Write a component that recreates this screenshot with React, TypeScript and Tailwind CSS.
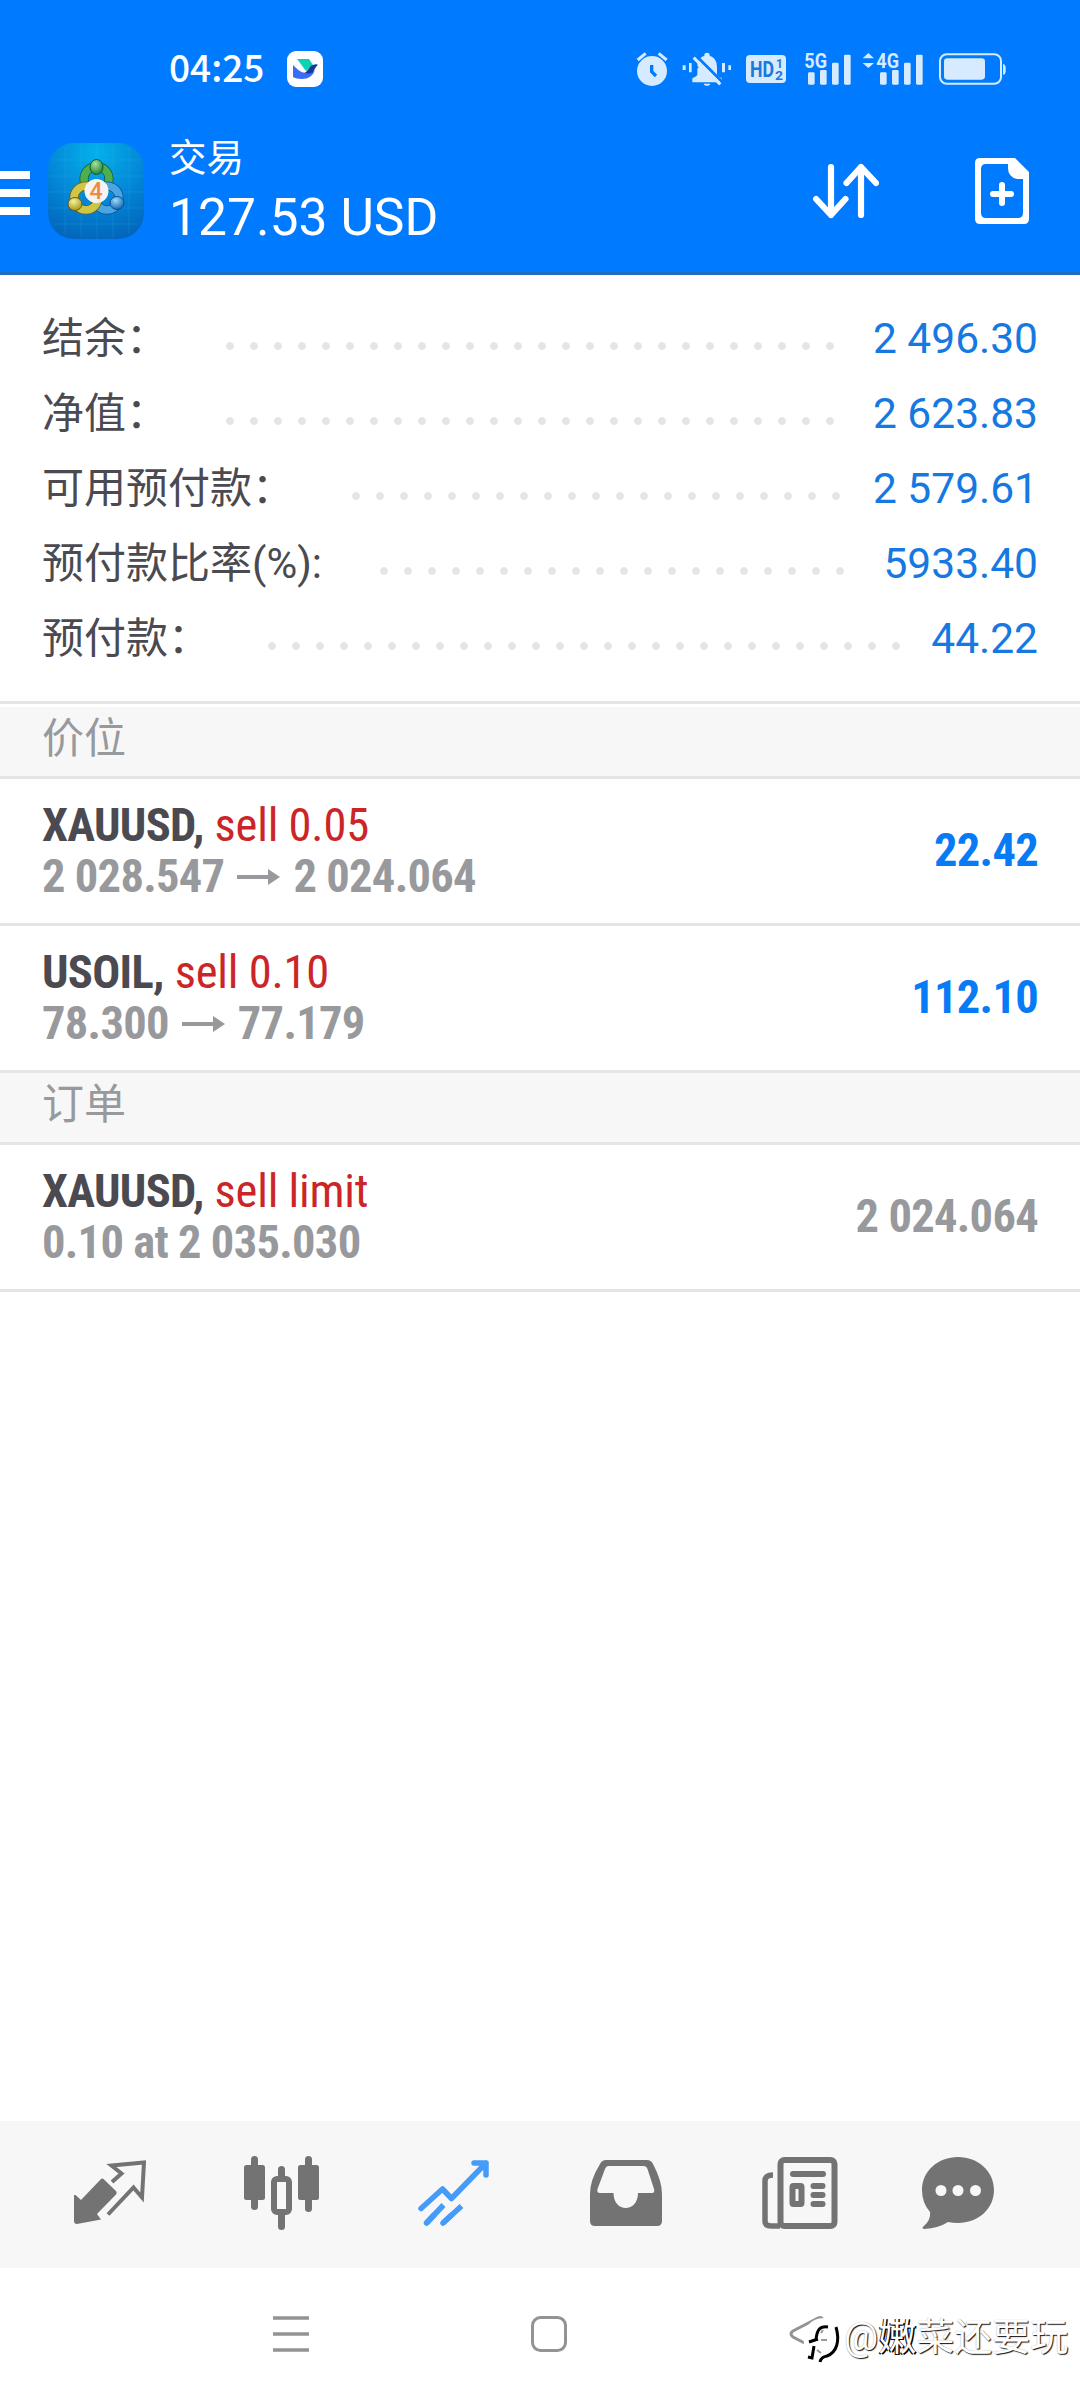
import React from 'react';

interface BalanceRow {
  label: string;
  value: string;
  dots: number;
}

const balance: BalanceRow[] = [
  { label: '结余：', value: '2 496.30', dots: 26 },
  { label: '净值：', value: '2 623.83', dots: 26 },
  { label: '可用预付款：', value: '2 579.61', dots: 21 },
  { label: '预付款比率(%):', value: '5933.40', dots: 20 },
  { label: '预付款：', value: '44.22', dots: 27 },
];

const positions = [
  { symbol: 'XAUUSD', side: 'sell 0.05', from: '2 028.547', to: '2 024.064', profit: '22.42' },
  { symbol: 'USOIL', side: 'sell 0.10', from: '78.300', to: '77.179', profit: '112.10' },
];

function SailBadge() {
  return (
    <svg className="w-9 h-9 ml-[23px]" viewBox="0 0 36 36">
      <rect width="36" height="36" rx="9" fill="#fff" />
      <path d="M10 8h12l4 6-7 6z" fill="#0bd3b5" />
      <path d="M6 14c4 4 7 7 12 8 4 1 8-1 10-3-2 6-7 9-13 9-4 0-7-1-9-2z" fill="#3a6df5" />
      <path d="M17 22c4-1 5-7 9-8 2-1 4-1 5 0-2 1-3 4-5 7-2 2-6 2-9 1z" fill="#17399b" />
    </svg>
  );
}

function AlarmIcon() {
  return (
    <svg className="w-8 h-[34px]" viewBox="18 36 96 102">
      <circle cx="66" cy="93" r="45" fill="#d6ebff" />
      <path d="M23 60l24-20M110 60L86 40" stroke="#d6ebff" strokeWidth="9" fill="none" />
      <path d="M65 75v20l13 13" stroke="#007aff" strokeWidth="10" fill="none" />
    </svg>
  );
}

function MutedBellIcon() {
  return (
    <svg className="w-[50px] h-[34px] ml-[14px]" viewBox="153 36 150 102">
      <g fill="#d6ebff">
        <path d="M184 127v-10c0-5 15-6 15-14V82c0-18 6-30 21-34v-4c0-8 16-8 16 0v4c15 4 22 16 22 34v21c0 8 15 9 15 14v10z" />
        <path d="M218 131h20c-2 8-18 8-20 0zM155 76h9v14h-9zM174 69h8v28h-8zM273 69h9v28h-9zM292 76h8v14h-8z" />
      </g>
      <path d="M196 48l84 84" stroke="#007aff" strokeWidth="9" />
      <path d="M183 66l18 18" stroke="#007aff" strokeWidth="6" />
      <path d="M188 53l80 80" stroke="#d6ebff" strokeWidth="9" />
    </svg>
  );
}

function HdBadge() {
  return (
    <svg className="w-10 h-7 ml-[14px]" viewBox="0 0 40 28">
      <rect width="40" height="28" rx="4" fill="#d6ebff" />
      <g fill="#1a78de" className="font-['Roboto'] font-bold">
        <text x="4" y="22" fontSize="22" textLength="24" lengthAdjust="spacingAndGlyphs">HD</text>
        <text x="30" y="13" fontSize="12">1</text>
        <text x="29" y="25" fontSize="12" textLength="8" lengthAdjust="spacingAndGlyphs">2</text>
      </g>
    </svg>
  );
}

function Signal({ label, updown }: { label: string; updown?: boolean }) {
  return (
    <svg className="w-[62px] h-[34px] overflow-visible" viewBox="694 34 186 102">
      <g fill="#d6ebff">
        {updown && <path d="M699 53l17-16 17 16zM699 67l17 15 17-15z" />}
        <text x="740" y="81" fontSize="61" textLength="68" lengthAdjust="spacingAndGlyphs" className="font-['Roboto'] font-bold">
          {label}
        </text>
        <rect x="751" y="95" width="20" height="37" rx="4" />
        <rect x="787" y="88" width="20" height="44" rx="4" />
        <rect x="823" y="66" width="20" height="66" rx="4" />
        <rect x="859" y="42" width="20" height="90" rx="4" />
      </g>
    </svg>
  );
}

function BatteryIcon() {
  return (
    <svg className="w-[67px] h-8 ml-4" viewBox="927 37 201 96">
      <rect x="930" y="41" width="183" height="88" rx="20" fill="none" stroke="#d6ebff" strokeWidth="6" />
      <rect x="942" y="53" width="123" height="64" rx="10" fill="#d6ebff" />
      <path d="M1119 69q8 2 8 10v14q0 8-8 10z" fill="#d6ebff" />
    </svg>
  );
}

function AppLogo() {
  return (
    <svg className="w-24 h-24 ml-[18px]" viewBox="0 0 96 96">
      <defs>
        <radialGradient id="tile" cx=".5" cy=".1" r=".95">
          <stop offset="0" stopColor="#04b1ea" />
          <stop offset=".5" stopColor="#0389d8" />
          <stop offset="1" stopColor="#0264ba" />
        </radialGradient>
        <radialGradient id="green" cx=".4" cy=".3" r=".7">
          <stop offset="0" stopColor="#a9e29a" />
          <stop offset="1" stopColor="#23833a" />
        </radialGradient>
        <radialGradient id="yellow" cx=".4" cy=".3" r=".7">
          <stop offset="0" stopColor="#f5f0a0" />
          <stop offset="1" stopColor="#a89b1c" />
        </radialGradient>
        <radialGradient id="blue" cx=".4" cy=".3" r=".7">
          <stop offset="0" stopColor="#9bdcfa" />
          <stop offset="1" stopColor="#1768b4" />
        </radialGradient>
      </defs>
      <rect width="96" height="96" rx="26" fill="url(#tile)" />
      <path
        d="M17 4v88M33 1v94M49 0v96M65 1v94M81 5v86M3 17h90M1 33h94M0 49h96M1 65h94M5 81h86"
        stroke="#4fc3f5"
        strokeOpacity=".2"
        strokeWidth=".8"
      />
      <circle cx="48.500" cy="36" r="12.500" fill="none" stroke="#145c33" strokeWidth="9" />
      <circle cx="48.500" cy="36" r="12.500" fill="none" stroke="#4fae4d" strokeWidth="7.500" />
      <circle cx="59" cy="55" r="12" fill="none" stroke="#0d4f92" strokeWidth="9" />
      <circle cx="59" cy="55" r="12" fill="none" stroke="#4aa5e0" strokeWidth="7.500" />
      <circle cx="38" cy="55" r="12" fill="none" stroke="#696012" strokeWidth="9" />
      <circle cx="38" cy="55" r="12" fill="none" stroke="#cfc645" strokeWidth="7.500" />
      <ellipse cx="48.500" cy="24" rx="6.500" ry="7.500" fill="url(#green)" stroke="#145c33" />
      <ellipse cx="27" cy="61" rx="7" ry="6.500" fill="url(#yellow)" stroke="#696012" />
      <ellipse cx="69" cy="60" rx="7" ry="6.500" fill="url(#blue)" stroke="#0d4f92" />
      <circle cx="48.500" cy="48" r="12" fill="#f6f4f2" />
      <text x="48" y="56" fontSize="23" textAnchor="middle" fill="#f08a3c" className="font-['Roboto'] font-medium">
        4
      </text>
    </svg>
  );
}

function SortIcon() {
  return (
    <svg className="w-[66px] h-[56px]" viewBox="0 0 66 56" fill="none" stroke="#fff" strokeWidth="6.200" strokeLinecap="round" strokeLinejoin="round">
      <path d="M18 4v48M3.100 36L18 52l14.500-16M48 52V4M33.500 20L48 4l15 16" />
    </svg>
  );
}

function NewOrderIcon() {
  return (
    <svg className="w-[54px] h-[66px] ml-24" viewBox="0 0 54 66">
      <path
        fill="#fff"
        fillRule="evenodd"
        d="M5 0h35l14 14v47q0 5-5 5H5q-5 0-5-5V5q0-5 5-5zm6 6q-5 0-5 5v44q0 5 5 5h32q5 0 5-5V21h-6q-9-2-9-11V6z"
      />
      <path d="M18 36h18M27 27v18" stroke="#fff" strokeWidth="6" strokeLinecap="round" />
    </svg>
  );
}

function PriceArrow() {
  return (
    <svg className="w-[43px] h-4 mx-[13px]" viewBox="0 0 43 16">
      <path d="M0 6h31V0l12 8-12 8v-6H0z" fill="#98999c" />
    </svg>
  );
}

function SectionTitle({ title }: { title: string }) {
  return (
    <div className="h-[72px] bg-[#f7f7f7] border-b-[3px] border-[#e5e5e5] px-[42px] pt-[2px] text-[42px] leading-[60px] text-[#98999c]">
      {title}
    </div>
  );
}

function TradeRow({ symbol, side, value, valueClass, children }: {
  symbol: string;
  side: string;
  value: string;
  valueClass: string;
  children: React.ReactNode;
}) {
  return (
    <div className="h-[147px] border-b-[3px] border-[#e5e5e5] px-[42px] flex items-center justify-between font-['Roboto_Condensed','Roboto',sans-serif] [font-stretch:75%] text-[46.500px] tracking-[-0.700px] font-bold">
      <div className="leading-[51px]">
        <div className="text-[#4a4a50]">
          {symbol}, <span className="ml-px text-[#cc2527] font-[450] tracking-[-0.200px]">{side}</span>
        </div>
        <div className="flex items-center text-[#98999c]">{children}</div>
      </div>
      <span className={valueClass}>{value}</span>
    </div>
  );
}

function TabBar() {
  return (
    <nav className="h-[147px] bg-[#f7f7f7] flex items-center pl-[74px] pb-[3px]">
      <svg className="w-[72px] h-[66px]" viewBox="0 0 72 66">
        <path d="M27 19q1.500-1 3 .5L42 31q1.500 2 0 3.500L23 54l4 5.500L3 64q-3 0-3-3V35l1.500 0L7 40z" fill="#737373" />
        <path d="M38 22l9.500-8.500L37.500 5.500 70 2.500 68 37.500 59.500 27.500 34 54.500" fill="none" stroke="#737373" strokeWidth="4" />
      </svg>
      <svg className="w-[75px] h-[74px] ml-[98px]" viewBox="0 0 75 74" fill="#737373">
        <rect y="9" width="21" height="35" rx="2.500" />
        <rect x="7" width="7" height="54" rx="3.500" />
        <rect x="54" y="9" width="21" height="35" rx="2.500" />
        <rect x="61" width="7" height="56" rx="3.500" />
        <rect x="34" y="10" width="7" height="14" rx="3.500" />
        <rect x="34" y="56" width="7" height="18" rx="3.500" />
        <rect x="30" y="23" width="15" height="33" rx="3" fill="none" stroke="#737373" strokeWidth="6" />
      </svg>
      <svg className="w-[72px] h-[66px] ml-[99px]" viewBox="0 0 72 66" fill="none" stroke="#459bf8" strokeWidth="5.500" strokeLinecap="round" strokeLinejoin="round">
        <path d="M3 48.500L24.500 29l9 9.500L68 3M56 3h12v12" />
        <path d="M8.500 63L25.500 45M25 63l18.500-17" strokeLinecap="butt" />
        <path d="M8.500 63L16 55M25 63l8-7.500" />
      </svg>
      <svg className="w-[72px] h-[66px] ml-[100px]" viewBox="0 0 72 66">
        <path
          fill="#737373"
          fillRule="evenodd"
          d="M16 0h41q4 0 6 4 9 17 9 30v27q0 5-5 5H5q-5 0-5-5V34Q0 20 10 4q2-4 6-4zm3 6q-3 0-4 3L7.500 29q-1 4 2.500 4h13.500c0 20 24.500 20 24.500 0h14q3 0 2-4L57.500 9q-1-3-4-3z"
        />
      </svg>
      <svg className="w-[76px] h-[72px] ml-[100px]" viewBox="0 0 76 72" fill="none" stroke="#737373" strokeWidth="6">
        <rect x="18.500" y="3" width="54" height="66" rx="4" />
        <path d="M11 18q-8 0-8 6v40q0 5 6 5h9" strokeWidth="5.500" />
        <path d="M31 17h30M51.500 29h9M51.500 38h9M51.500 47h9" strokeLinecap="round" />
        <rect x="30.500" y="29" width="9" height="18" rx="1" />
      </svg>
      <svg className="w-[72px] h-[72px] ml-[84px]" viewBox="0 0 72 72">
        <path d="M36 0c20 0 36 14 36 33S56 66 36 66q-5 0-10-1-9 6-24 7-3-1 0-3 7-6 6-14Q0 46 0 33C0 14 16 0 36 0z" fill="#737373" />
        <g fill="#f7f7f7">
          <circle cx="19" cy="33.500" r="5.500" />
          <circle cx="36" cy="33.500" r="5.500" />
          <circle cx="53.500" cy="33.500" r="5.500" />
        </g>
      </svg>
    </nav>
  );
}

function SystemNav() {
  return (
    <div className="relative h-[132px] flex items-center">
      <svg className="w-9 h-9 ml-[273px]" viewBox="0 0 36 36" stroke="#939393" strokeWidth="3.500">
        <path d="M0 2h36M0 18h36M0 34h36" />
      </svg>
      <svg className="w-9 h-9 ml-[222px]" viewBox="0 0 36 36">
        <rect x="1.500" y="1.500" width="33" height="33" rx="8" fill="none" stroke="#939393" strokeWidth="3" />
      </svg>
      <svg className="w-9 h-10 ml-[222px]" viewBox="0 0 36 40">
        <path d="M34 7Q33 2 29 4L4 17q-4 3 0 6l25 13q4 2 5-3" fill="none" stroke="#939393" strokeWidth="3" />
      </svg>
      {/* uploader tag lies over the back button */}
      <div className="absolute left-[800px] top-[42px] flex items-center">
        <svg className="w-10 h-[50px] overflow-visible" viewBox="0 0 40 50">
          <path d="M9 12C16 5 28 4 34 12s6 24-4 30l-12 6-12-4q-6-16 3-32z" fill="#fff" />
          <path d="M28 15c-8-1-11 2-12 13M9 30l9-3M14 34l-2 12-4-1" fill="none" stroke="#000" strokeWidth="3" />
          <path d="M21 28h6M21 21l2-3M17 38l4 3" stroke="#999" strokeWidth="2" />
          <path d="M36 15c4 14 1 25-9 29q-6 1-7 6" fill="none" stroke="#000" strokeWidth="3" />
        </svg>
        <span className="ml-1 text-[38px] leading-[54px] text-white whitespace-nowrap [text-shadow:1px_1px_1px_#111,0_0_1px_#aaa]">
          @<span className="[text-shadow:1.500px_1px_0_#000,-1px_1px_0_#111]">嫩</span>菜还要玩
        </span>
      </div>
    </div>
  );
}

export default function App() {
  return (
    <div className="w-[1080px] h-[2400px] bg-white flex flex-col overflow-hidden font-['Roboto','Noto_Sans_CJK_SC',sans-serif]">
      <header className="h-[275px] bg-[#007aff] border-b-[3px] border-[#1e6fc2] text-white">
        <div className="h-[138px] flex items-center pl-[169px] pr-[74px]">
          <span className="text-[37px] leading-none font-medium font-['Noto_Sans_CJK_SC',sans-serif] mb-[5px]">04:25</span>
          <SailBadge />
          <div className="ml-auto flex items-center">
            <AlarmIcon />
            <MutedBellIcon />
            <HdBadge />
            <div className="flex ml-[3px] gap-[10px]">
              <Signal label="5G" />
              <Signal label="4G" updown />
            </div>
            <BatteryIcon />
          </div>
        </div>
        <div className="h-[106px] flex items-center pr-[51px]">
          <div className="w-[30px] flex flex-col gap-[10px] mt-1">
            <div className="h-2 bg-white" />
            <div className="h-2 bg-white" />
            <div className="h-2 bg-white" />
          </div>
          <AppLogo />
          <div className="ml-[25px] mt-1">
            <div className="text-[37.500px] leading-[50px]">交易</div>
            <div className="text-[51.600px] leading-[70px]">127.53 USD</div>
          </div>
          <div className="ml-auto flex items-center">
            <SortIcon />
            <NewOrderIcon />
          </div>
        </div>
      </header>

      <section className="pt-[26px] pb-[25px] px-[42px] border-b-[3px] border-[#e5e5e5]">
        {balance.map((row) => (
          <div key={row.label} className="h-[75px] flex items-center">
            <span className="text-[42px] text-[#4a4a50]">{row.label}</span>
            <div
              className="ml-[50px] mt-[14px] h-2 bg-[radial-gradient(circle,#e5e5e5_3.500px,transparent_4.200px)] bg-[length:24px_8px]"
              style={{ width: row.dots * 24 }}
            />
            <span className="ml-auto text-[42.500px] text-[#1679e2]">{row.value}</span>
          </div>
        ))}
      </section>

      <main className="flex-1 pt-[3px]">
        <SectionTitle title="价位" />
        {positions.map((p) => (
          <TradeRow key={p.symbol} symbol={p.symbol} side={p.side} value={p.profit} valueClass="text-[#077bf6]">
            {p.from}
            <PriceArrow />
            {p.to}
          </TradeRow>
        ))}
        <SectionTitle title="订单" />
        <TradeRow symbol="XAUUSD" side="sell limit" value="2 024.064" valueClass="text-[#98999c]">
          0.10 at 2 035.030
        </TradeRow>
      </main>

      <TabBar />
      <SystemNav />
    </div>
  );
}
